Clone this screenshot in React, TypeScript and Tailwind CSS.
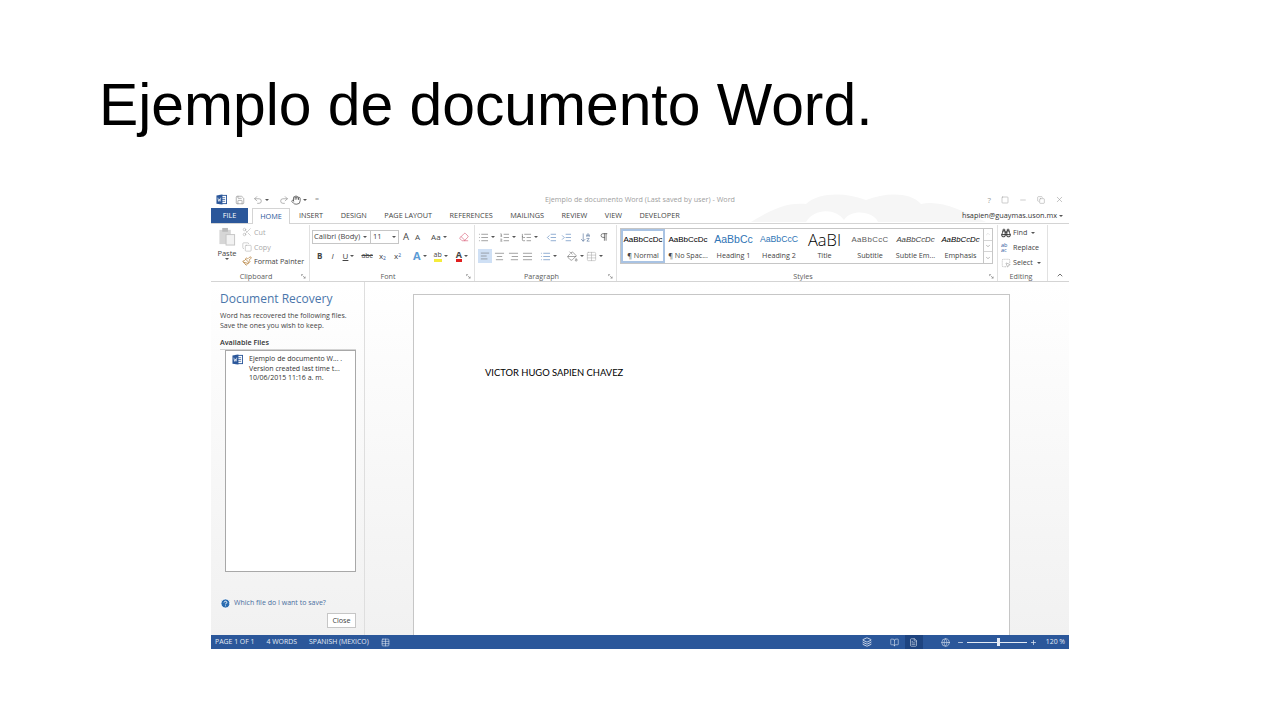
import type { ReactNode } from 'react';
import {
  AlignCenter,
  AlignJustify,
  AlignLeft,
  AlignRight,
  ArrowDownAZ,
  Binoculars,
  ChevronDown,
  ChevronUp,
  Copy,
  Eraser,
  Hand,
  Indent,
  Layers,
  List,
  ListOrdered,
  ListTree,
  Outdent,
  Paintbrush,
  PaintBucket,
  Pilcrow,
  Redo2,
  Save,
  Scissors,
  SquareDashedMousePointer,
  Table,
  Undo2,
  X,
  Minus,
  Plus,
  BookOpen,
  FileText,
  Globe,
  Square,
  HelpCircle,
} from 'lucide-react';

const tabs = ['INSERT', 'DESIGN', 'PAGE LAYOUT', 'REFERENCES', 'MAILINGS', 'REVIEW', 'VIEW', 'DEVELOPER'];

const styles = [
  { sample: 'AaBbCcDc', label: '¶ Normal', cls: 'text-[8px] text-black', w: 'w-[44px]', active: true },
  { sample: 'AaBbCcDc', label: '¶ No Spac...', cls: 'text-[8px] text-black', w: 'w-[46px]' },
  { sample: 'AaBbCc', label: 'Heading 1', cls: 'text-[10.5px] text-[#2e74b5]', w: 'w-[45px]' },
  { sample: 'AaBbCcC', label: 'Heading 2', cls: 'text-[8.7px] text-[#2e74b5]', w: 'w-[46px]' },
  { sample: 'AaBI', label: 'Title', cls: "text-[16.5px] leading-none font-light font-['Open_Sans',sans-serif] text-black", w: 'w-[45px]' },
  { sample: 'AaBbCcC', label: 'Subtitle', cls: 'text-[7.8px] tracking-[0.4px] text-[#5a5a5a]', w: 'w-[46px]' },
  { sample: 'AaBbCcDc', label: 'Subtle Em...', cls: 'text-[7.8px] italic text-[#404040]', w: 'w-[45px]' },
  { sample: 'AaBbCcDc', label: 'Emphasis', cls: 'text-[7.8px] italic text-black', w: 'w-[45px]' },
];

function WordLogo({ className }: { className: string }) {
  return (
    <svg viewBox="0 0 12 12" className={className}>
      <rect x="4" y="1.5" width="7.5" height="9" fill="#fff" stroke="#2b579a" />
      <path d="M6 4h4M6 6h4M6 8h4" stroke="#2b579a" strokeWidth="0.8" />
      <path d="M0.5 1.5 7 0.5v11l-6.5-1z" fill="#2b579a" />
      <path d="M2 4l0.8 4 0.8-2.6L4.4 8 5.2 4" fill="none" stroke="#fff" strokeWidth="0.7" />
    </svg>
  );
}

function Launcher() {
  return (
    <svg viewBox="0 0 6 6" className="h-[5px] w-[5px] text-[#777]">
      <path d="M0.5 2.5v-2h2M2 2l3 3M5 3v2H3" fill="none" stroke="currentColor" strokeWidth="0.7" />
    </svg>
  );
}

function Caret() {
  return <span className="mx-[2px] h-0 w-0 shrink-0 border-x-[2px] border-t-[2px] border-x-transparent border-t-[#555]" />;
}

function Group({ label, width, launcher, children }: { label: string; width: string; launcher?: boolean; children: ReactNode }) {
  return (
    <div className={`flex h-full shrink-0 flex-col border-r border-[#e1e1e1] ${width}`}>
      <div className="min-h-0 flex-1">{children}</div>
      <div className="flex h-[10px] items-center justify-between pr-[3px] text-[7.2px] text-[#5c5c5c]">
        <span />
        <span>{label}</span>
        {launcher ? <Launcher /> : <span />}
      </div>
    </div>
  );
}

export default function App() {
  return (
    <div className="h-[720px] w-[1280px] overflow-hidden bg-white font-['Liberation_Sans',sans-serif]">
      <h1 className="pl-[99px] pt-[66px] text-[58.8px] leading-[78px] font-normal text-black">Ejemplo de documento Word.</h1>

      <div className="ml-[211px] mt-[48px] flex h-[457px] w-[858px] flex-col bg-white font-['Open_Sans',sans-serif]">
        {/* title bar */}
        <div className="relative flex h-[16px] shrink-0 items-center pb-[1px] pl-[5px] text-[#8a8a8a]">
          <svg viewBox="0 0 250 30" className="absolute left-[535px] top-0 h-[30px] w-[250px]">
            <path d="M5 30C25 18 40 10 60 12 72 0 100 0 120 8c20-8 45-8 55 4 20-4 40 6 65 18z" fill="#f6f6f6" />
            <path d="M60 30c8-14 30-14 38-2 8-12 30-8 34 2z" fill="#fff" />
          </svg>
          <WordLogo className="relative h-[11px] w-[11px]" />
          <Save className="relative ml-[8px] h-[10px] w-[10px]" strokeWidth={1.5} />
          <Undo2 className="relative ml-[8px] h-[10px] w-[10px]" strokeWidth={1.5} />
          <Caret />
          <Redo2 className="relative ml-[8px] h-[10px] w-[10px]" strokeWidth={1.5} />
          <Hand className="relative ml-[2px] h-[10px] w-[10px] text-[#555]" strokeWidth={2} />
          <Caret />
          <span className="relative ml-[6px] text-[7px]">=</span>
          <span className="relative ml-[226px] text-[7.2px] text-[#a0a0a0]">Ejemplo de documento Word (Last saved by user) - Word</span>
          <div className="relative ml-auto flex items-center gap-[10px] pr-[5px] text-[#999]">
            <span className="text-[8px]">?</span>
            <Square className="h-[8px] w-[8px]" strokeWidth={1.5} />
            <Minus className="h-[8px] w-[8px]" strokeWidth={1.5} />
            <Copy className="h-[8px] w-[8px]" strokeWidth={1.5} />
            <X className="h-[9px] w-[9px]" strokeWidth={1.5} />
          </div>
        </div>

        {/* tabs */}
        <div className="relative flex h-[16px] shrink-0 items-stretch border-b border-[#d4d4d4] text-[7.3px] text-[#444]">
          <div className="flex w-[37px] items-center justify-center bg-[#2b579a] text-white">FILE</div>
          <div className="mb-[-1px] ml-[4px] flex w-[38px] items-center justify-center border-x border-t border-[#d4d4d4] bg-white text-[#2b579a]">HOME</div>
          <div className="flex items-center gap-[17.5px] pl-[9px]">
            {tabs.map((t) => (
              <span key={t}>{t}</span>
            ))}
          </div>
          <span className="ml-auto flex items-center pr-[4px] text-[7.3px] text-[#333]">
            hsapien@guaymas.uson.mx
            <Caret />
          </span>
        </div>

        {/* ribbon */}
        <div className="flex h-[58px] shrink-0 border-b border-[#d4d4d4] pt-[1px]">
          <Group label="Clipboard" width="w-[99px]" launcher>
            <div className="flex h-full pl-[7px] pt-[2px]">
              <div className="flex w-[18px] flex-col items-center text-[7.5px] text-[#444]">
                <svg viewBox="0 0 18 20" className="h-[19px] w-[18px]">
                  <rect x="1" y="3" width="12" height="15" fill="#d6d6d6" />
                  <rect x="4" y="1" width="6" height="4" fill="#bbb" />
                  <rect x="8" y="8" width="9" height="11" fill="#f2f2f2" stroke="#c4c4c4" />
                </svg>
                <span className="mt-[3px] leading-[9px]">Paste</span>
                <Caret />
              </div>
              <div className="ml-[6px] flex flex-col gap-[4.5px] text-[7.2px] leading-[10px] text-[#aaa]">
                <span className="flex items-center gap-[2px]">
                  <Scissors className="h-[10px] w-[10px]" strokeWidth={1.3} /> Cut
                </span>
                <span className="flex items-center gap-[2px]">
                  <Copy className="h-[10px] w-[10px]" strokeWidth={1.3} /> Copy
                </span>
                <span className="flex items-center gap-[2px] whitespace-nowrap text-[#444]">
                  <Paintbrush className="h-[10px] w-[10px] text-[#b5803a]" strokeWidth={1.8} /> Format Painter
                </span>
              </div>
            </div>
          </Group>

          <Group label="Font" width="w-[165px]" launcher>
            <div className="flex flex-col gap-[5px] pl-[2px] pt-[5px] text-[#444]">
              <div className="flex h-[14px] items-center text-[7.5px]">
                <div className="flex h-[14px] w-[59px] items-center justify-between whitespace-nowrap border border-[#c6c6c6] pl-[1px] pr-[1px]">
                  Calibri (Body) <Caret />
                </div>
                <div className="flex h-[14px] w-[28px] items-center justify-between border border-l-0 border-[#c6c6c6] pl-[2px]">
                  11 <Caret />
                </div>
                <span className="ml-[4px] text-[9.5px]">A</span>
                <span className="ml-[6px] text-[8px]">A</span>
                <span className="ml-[11px] text-[8px]">Aa</span>
                <Caret />
                <Eraser className="ml-[10px] h-[10px] w-[10px] text-[#d9627c]" strokeWidth={1.6} />
              </div>
              <div className="flex h-[14px] items-center text-[8px]">
                <span className="ml-[5px] font-bold">B</span>
                <span className="ml-[9px] italic">I</span>
                <span className="ml-[9px] underline">U</span>
                <Caret />
                <span className="ml-[5px] text-[7px] line-through">abc</span>
                <span className="ml-[6px]">x<sub className="text-[5px] text-[#2b579a]">2</sub></span>
                <span className="ml-[8px]">x<sup className="text-[5px] text-[#2b579a]">2</sup></span>
                <span className="ml-[12px] text-[11px] font-bold text-[#5b9bd5]">A</span>
                <Caret />
                <span className="ml-[5px] border-b-[3px] border-[#f5ec3c] text-[7px] leading-[8px]">ab</span>
                <Caret />
                <span className="ml-[6px] border-b-[3px] border-[#e01f1f] text-[9px] font-bold leading-[9px]">A</span>
                <Caret />
              </div>
            </div>
          </Group>

          <Group label="Paragraph" width="w-[142px]" launcher>
            <div className="flex flex-col gap-[5px] pl-[3px] pt-[5px] text-[#666]">
              <div className="flex h-[14px] items-center">
                <List className="h-[11px] w-[11px]" strokeWidth={1.3} />
                <Caret />
                <ListOrdered className="ml-[2px] h-[11px] w-[11px]" strokeWidth={1.3} />
                <Caret />
                <ListTree className="ml-[3px] h-[11px] w-[11px]" strokeWidth={1.3} />
                <Caret />
                <Outdent className="ml-[6px] h-[11px] w-[11px] text-[#4a7ab5]" strokeWidth={1.3} />
                <Indent className="ml-[4px] h-[11px] w-[11px] text-[#4a7ab5]" strokeWidth={1.3} />
                <ArrowDownAZ className="ml-[8px] h-[11px] w-[11px] text-[#4a6a95]" strokeWidth={1.3} />
                <Pilcrow className="ml-[8px] h-[10px] w-[10px] text-[#444]" strokeWidth={1.6} />
              </div>
              <div className="flex h-[14px] items-center">
                <span className="flex h-[14px] w-[14px] items-center justify-center bg-[#cfe0f5]">
                  <AlignLeft className="h-[10px] w-[10px]" strokeWidth={1.3} />
                </span>
                <AlignCenter className="ml-[2px] h-[11px] w-[11px]" strokeWidth={1.3} />
                <AlignRight className="ml-[3px] h-[11px] w-[11px]" strokeWidth={1.3} />
                <AlignJustify className="ml-[3px] h-[11px] w-[11px]" strokeWidth={1.3} />
                <List className="ml-[7px] h-[11px] w-[11px] text-[#4a7ab5]" strokeWidth={1.3} />
                <Caret />
                <PaintBucket className="ml-[8px] h-[11px] w-[11px]" strokeWidth={1.3} />
                <Caret />
                <Table className="h-[11px] w-[11px] text-[#aaa]" strokeWidth={1.2} />
                <Caret />
              </div>
            </div>
          </Group>

          <Group label="Styles" width="w-[381px]" launcher>
            <div className="flex pl-[3px] pt-[3px]">
              <div className="flex h-[36px] w-[364px] border border-[#c6c6c6]">
                {styles.map((s) => (
                  <div
                    key={s.label}
                    className={`flex shrink-0 flex-col items-center overflow-hidden ${s.w} ${s.active ? 'border-2 border-[#a9c3e3]' : 'border-2 border-transparent'}`}
                  >
                    <div className={`flex h-[18px] w-full shrink-0 items-center justify-center whitespace-nowrap font-['Liberation_Sans',sans-serif] ${s.cls}`}>
                      {s.sample}
                    </div>
                    <div className="whitespace-nowrap text-[7.2px] leading-[12px] text-[#444]">{s.label}</div>
                  </div>
                ))}
              </div>
              <div className="flex h-[36px] w-[9px] flex-col border border-l-0 border-[#c6c6c6] text-[#777]">
                <div className="flex flex-1 items-center justify-center border-b border-[#d4d4d4] text-[#ccc]">
                  <ChevronUp className="h-[6px] w-[6px]" />
                </div>
                <div className="flex flex-1 items-center justify-center border-b border-[#d4d4d4]">
                  <ChevronDown className="h-[6px] w-[6px]" />
                </div>
                <div className="flex flex-1 items-center justify-center">
                  <ChevronDown className="h-[6px] w-[6px]" />
                </div>
              </div>
            </div>
          </Group>

          <Group label="Editing" width="w-[50px]">
            <div className="flex flex-col gap-[4px] pl-[3px] pt-[2px] text-[7.2px] leading-[11px] text-[#444]">
              <span className="flex items-center gap-[2px]">
                <Binoculars className="h-[10px] w-[10px] text-[#333]" strokeWidth={2.4} /> Find <Caret />
              </span>
              <span className="flex items-center gap-[2px]">
                <span className="w-[10px] text-[5.5px] leading-[5px] text-[#2b579a]">ab ac</span> Replace
              </span>
              <span className="flex items-center gap-[2px]">
                <SquareDashedMousePointer className="h-[10px] w-[10px] text-[#888]" strokeWidth={1.2} /> Select <Caret />
              </span>
            </div>
          </Group>

          <div className="flex flex-1 items-end justify-end pb-[2px] pr-[5px]">
            <ChevronUp className="h-[8px] w-[8px] text-[#555]" strokeWidth={2.5} />
          </div>
        </div>

        {/* body */}
        <div className="flex min-h-0 flex-1 bg-gradient-to-b from-white to-[#f1f1f1]">
          <aside className="flex w-[154px] shrink-0 flex-col border-r border-[#dedede] pl-[9px] pr-[8px]">
            <div className="mt-[8px] text-[12px] leading-[17px] text-[#4a76ab]">Document Recovery</div>
            <p className="mt-[4px] text-[7px] leading-[9.5px] text-[#444]">
              Word has recovered the following files.
              <br />
              Save the ones you wish to keep.
            </p>
            <div className="mt-[7px] border-b border-[#d4d4d4] pb-[1px] text-[7.2px] leading-[11px] font-semibold text-[#333]">Available Files</div>
            <div className="ml-[5px] flex h-[222px] gap-[6px] border border-[#a8a8a8] bg-white pl-[6px] pt-[3px]">
              <WordLogo className="h-[11px] w-[11px] shrink-0" />
              <div className="whitespace-nowrap text-[7px] leading-[9.5px] text-[#333]">
                Ejemplo de documento W... .
                <br />
                Version created last time t...
                <br />
                10/06/2015 11:16 a. m.
              </div>
            </div>
            <div className="mt-[26px] flex items-center gap-[3px] text-[7px] text-[#4a6f9f]">
              <HelpCircle className="h-[11px] w-[11px] fill-[#2b6cb0] text-white" strokeWidth={2} />
              Which file do I want to save?
            </div>
            <div className="mt-[4px] flex justify-end">
              <div className="flex h-[15px] w-[29px] items-center justify-center border border-[#c6c6c6] bg-white text-[7.2px] text-[#444]">Close</div>
            </div>
          </aside>
          <main className="min-w-0 flex-1 pl-[48px] pt-[12px]">
            <div className="h-full w-[597px] border-x border-t border-[#c6c6c6] bg-white pl-[71px] pt-[71px]">
              <p className="font-['Lato',sans-serif] text-[9.4px] leading-[13px] text-black">VICTOR HUGO SAPIEN CHAVEZ</p>
            </div>
          </main>
        </div>

        {/* status bar */}
        <div className="flex h-[14px] shrink-0 items-center bg-[#2b579a] pl-[4px] text-[6.9px] text-[#e4ebf5]">
          <span>PAGE 1 OF 1</span>
          <span className="ml-[12px]">4 WORDS</span>
          <span className="ml-[12px]">SPANISH (MEXICO)</span>
          <Table className="ml-[12px] h-[9px] w-[9px]" strokeWidth={1.5} />
          <Layers className="ml-[472px] h-[10px] w-[10px]" strokeWidth={2} />
          <BookOpen className="ml-[18px] h-[9px] w-[9px]" strokeWidth={1.5} />
          <span className="ml-[6px] flex h-[14px] w-[18px] items-center justify-center bg-[#1e4480]">
            <FileText className="h-[9px] w-[9px]" strokeWidth={1.5} />
          </span>
          <Globe className="ml-[18px] h-[9px] w-[9px]" strokeWidth={1.5} />
          <Minus className="ml-[7px] h-[7px] w-[7px]" strokeWidth={2.5} />
          <div className="relative mx-[3px] flex h-[9px] w-[60px] items-center">
            <div className="h-px w-full bg-[#e4ebf5]" />
            <div className="absolute left-[30px] h-[8px] w-[3px] bg-[#e4ebf5]" />
          </div>
          <Plus className="h-[7px] w-[7px]" strokeWidth={2.5} />
          <span className="ml-[9px]">120 %</span>
        </div>
      </div>
    </div>
  );
}
